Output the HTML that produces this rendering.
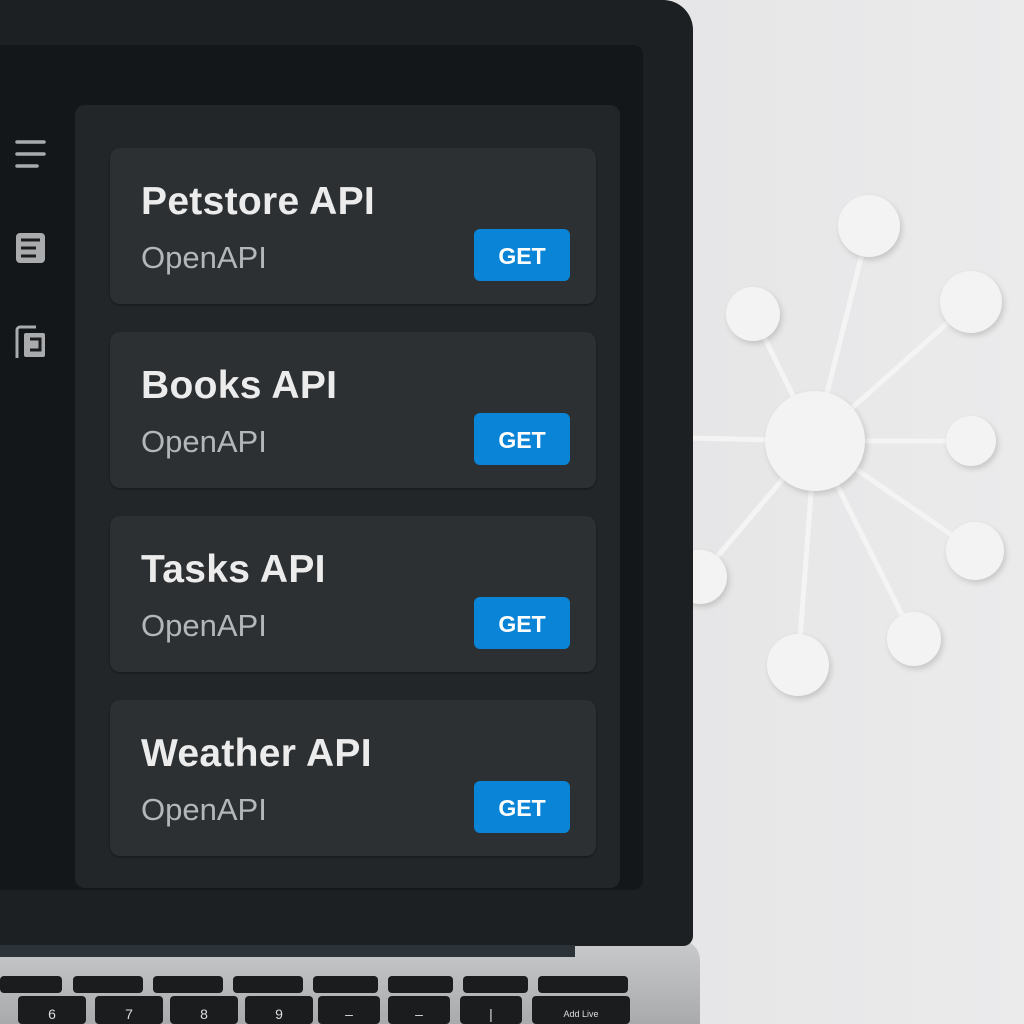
<!DOCTYPE html>
<html><head><style>
html,body{margin:0;width:1024px;height:1024px;overflow:hidden}
body{position:relative;font-family:"Liberation Sans",sans-serif;background:linear-gradient(90deg,#dcdcde,#ebebec);}
.abs{position:absolute}
.card{position:absolute;left:110px;width:486px;height:156px;background:#2c3033;border-radius:10px;box-shadow:0 1px 2px rgba(0,0,0,.4)}
.card h{position:absolute;left:31px;top:32px;font-size:39px;font-weight:bold;color:#ececec;display:block;letter-spacing:0.3px}
.card p{position:absolute;left:31px;top:92px;margin:0;font-size:31px;color:#b4b7b9}
.card b{position:absolute;left:364px;top:81px;width:96px;height:52px;background:#0a84d6;border-radius:6px;color:#fff;font-size:23px;line-height:54px;text-align:center}
.key{position:absolute;background:#1a1c1e;border-radius:4px;color:#ddd;text-align:center;font-size:14px}
</style></head><body>
<svg class="abs" style="left:0;top:0" width="1024" height="1024">
<g stroke="#f4f4f4" stroke-width="5" fill="#f2f2f3">
<line x1="690" y1="438" x2="815" y2="441"/>
<line x1="815" y1="441" x2="869" y2="226"/><line x1="815" y1="441" x2="753" y2="314"/>
<line x1="815" y1="441" x2="971" y2="302"/><line x1="815" y1="441" x2="971" y2="441"/>
<line x1="815" y1="441" x2="975" y2="551"/><line x1="815" y1="441" x2="914" y2="639"/>
<line x1="815" y1="441" x2="798" y2="665"/><line x1="815" y1="441" x2="700" y2="577"/>
</g>
<g fill="#f3f3f4" style="filter:drop-shadow(2px 3px 3px rgba(0,0,0,.15))">
<circle cx="815" cy="441" r="50"/><circle cx="869" cy="226" r="31"/><circle cx="753" cy="314" r="27"/>
<circle cx="971" cy="302" r="31"/><circle cx="971" cy="441" r="25"/><circle cx="975" cy="551" r="29"/>
<circle cx="914" cy="639" r="27"/><circle cx="798" cy="665" r="31"/><circle cx="700" cy="577" r="27"/>
</g>
</svg>
<div class="abs" style="left:0;top:940px;width:700px;height:84px;background:linear-gradient(#c9cacc,#a9aaac);border-top-right-radius:20px"></div>
<div class="abs" style="left:0;top:0;width:693px;height:946px;background:#1c2023;border-top-right-radius:30px;border-bottom-right-radius:10px"></div>
<div class="abs" style="left:0;top:945px;width:575px;height:12px;background:#2b3338"></div>
<div class="abs" style="left:0;top:45px;width:643px;height:845px;background:#13171a;border-radius:0 10px 10px 0"></div>
<div class="abs" style="left:75px;top:105px;width:545px;height:783px;background:#222629;border-radius:10px"></div>
<svg class="abs" style="left:12px;top:138px" width="40" height="230">
<g stroke="#a9abad" stroke-width="3.5" stroke-linecap="round"><line x1="5" y1="4" x2="32" y2="4"/><line x1="5" y1="16" x2="32" y2="16"/><line x1="5" y1="28" x2="25" y2="28"/></g>
<rect x="4" y="95" width="29" height="30" rx="4" fill="#a9abad"/>
<g stroke="#1a1d20" stroke-width="3"><line x1="9" y1="102" x2="28" y2="102"/><line x1="9" y1="110" x2="24" y2="110"/><line x1="9" y1="118" x2="24" y2="118"/></g>
<path d="M5 220V192a3 3 0 0 1 3-3h16" stroke="#a9abad" stroke-width="3" fill="none"/>
<rect x="12" y="195" width="21" height="24" rx="2" fill="#a9abad"/><path d="M18 201h10v11h-10" stroke="#1a1d20" stroke-width="3" fill="none"/>
</svg>
<div class="card" style="top:148px"><h>Petstore API</h><p>OpenAPI</p><b>GET</b></div>
<div class="card" style="top:332px"><h>Books API</h><p>OpenAPI</p><b>GET</b></div>
<div class="card" style="top:516px"><h>Tasks API</h><p>OpenAPI</p><b>GET</b></div>
<div class="card" style="top:700px"><h>Weather API</h><p>OpenAPI</p><b>GET</b></div>
<div class="key" style="left:0;top:976px;width:62px;height:17px"></div>
<div class="key" style="left:73px;top:976px;width:70px;height:17px"></div>
<div class="key" style="left:153px;top:976px;width:70px;height:17px"></div>
<div class="key" style="left:233px;top:976px;width:70px;height:17px"></div>
<div class="key" style="left:313px;top:976px;width:65px;height:17px"></div>
<div class="key" style="left:388px;top:976px;width:65px;height:17px"></div>
<div class="key" style="left:463px;top:976px;width:65px;height:17px"></div>
<div class="key" style="left:538px;top:976px;width:90px;height:17px"></div>
<div class="key" style="left:18px;top:996px;width:68px;height:28px;line-height:36px">6</div>
<div class="key" style="left:95px;top:996px;width:68px;height:28px;line-height:36px">7</div>
<div class="key" style="left:170px;top:996px;width:68px;height:28px;line-height:36px">8</div>
<div class="key" style="left:245px;top:996px;width:68px;height:28px;line-height:36px">9</div>
<div class="key" style="left:318px;top:996px;width:62px;height:28px;line-height:36px">–</div>
<div class="key" style="left:388px;top:996px;width:62px;height:28px;line-height:36px">–</div>
<div class="key" style="left:460px;top:996px;width:62px;height:28px;line-height:36px">|</div>
<div class="key" style="left:532px;top:996px;width:98px;height:28px;line-height:36px;font-size:9px">Add Live</div>
</body></html>
